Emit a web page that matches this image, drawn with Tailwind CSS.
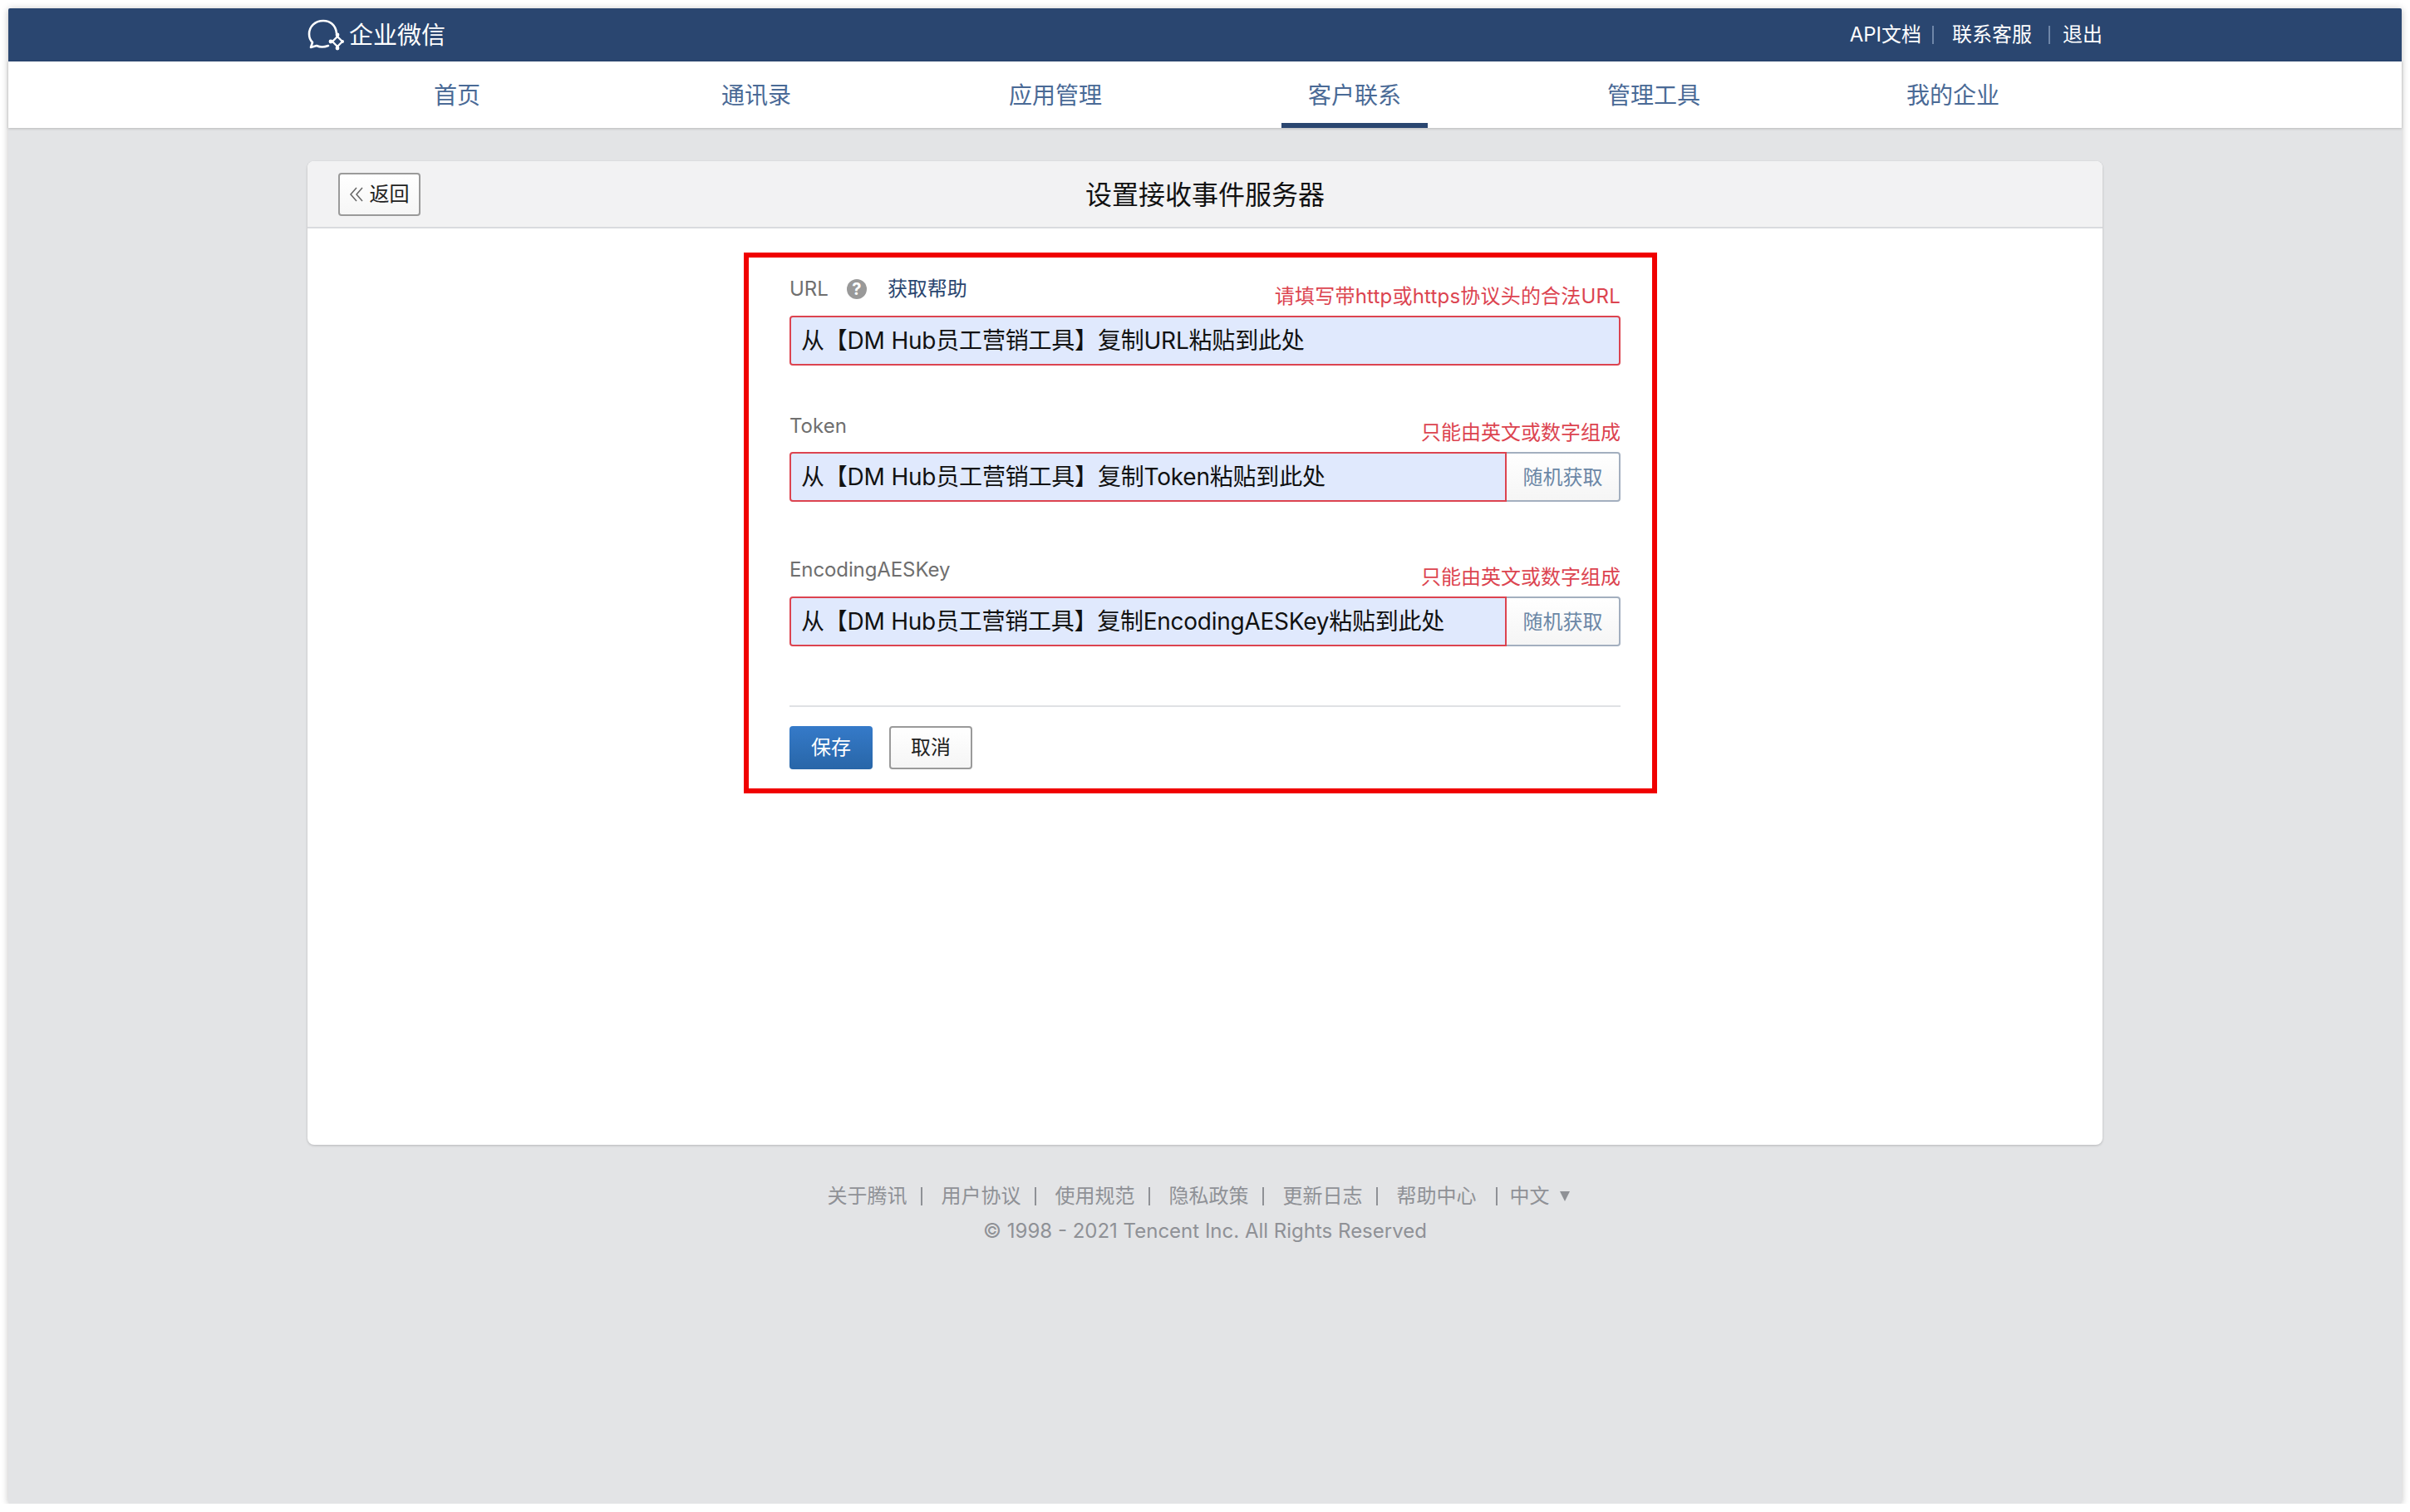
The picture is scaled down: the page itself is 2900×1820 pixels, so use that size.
<!DOCTYPE html>
<html lang="zh-CN">
<head>
  <meta charset="UTF-8" />
  <title>企业微信</title>
  <script src="https://cdn.jsdelivr.net/npm/@tailwindcss/browser@4"></script>
</head>
<body class="bg-white font-['Inter','Noto_Sans_CJK_SC',sans-serif]">
  <div class="relative w-[2880px] h-[1800px] ml-[10px] mt-[10px] rounded-[2px] bg-[#e3e4e6] shadow-[0_1px_8px_rgba(0,0,0,0.25)]">
    <!-- Top bar -->
    <header class="h-16 bg-[#2a4670] text-white rounded-t-[2px]">
      <div class="w-[2160px] h-full ml-[360px] flex items-center justify-between">
        <div class="flex items-center gap-[6px]">
          <svg width="44" height="40" viewBox="0 0 44 40" fill="none" class="mt-[2px]">
            <path d="M35 17C34 7 27 2 19 2C9 2 2 9 2 18C2 23 4 26 6 28L4 34L11 32C15 34 20 34 25 32" stroke="white" stroke-width="2.6" stroke-linecap="round" stroke-linejoin="round"/>
            <path d="M36 21L42 27L36 33L30 27Z" stroke="white" stroke-width="2.4" stroke-linejoin="round"/>
            <circle cx="36" cy="19" r="2.4" fill="white"/>
            <circle cx="28" cy="27" r="2.4" fill="white"/>
            <circle cx="36" cy="35" r="2.4" fill="white"/>
            <circle cx="42" cy="27" r="2" fill="white"/>
          </svg>
          <span class="text-[29px] leading-none">企业微信</span>
        </div>
        <div class="flex items-center text-[24px] leading-none">
          <span>API文档</span>
          <span class="w-[2px] h-[22px] bg-[#6f86a8] ml-[13px] mr-[22px]"></span>
          <span>联系客服</span>
          <span class="w-[2px] h-[22px] bg-[#6f86a8] ml-[20px] mr-[15px]"></span>
          <span>退出</span>
        </div>
      </div>
    </header>

    <!-- Nav -->
    <nav class="h-20 bg-white shadow-[0_1px_3px_rgba(0,0,0,0.2)]">
      <ul class="w-[2160px] h-full ml-[360px] grid grid-cols-6 text-[28px] text-[#4a6a96] text-center">
        <li class="pt-[20px]">首页</li>
        <li class="pt-[20px]">通讯录</li>
        <li class="pt-[20px]">应用管理</li>
        <li class="pt-[20px] h-full w-[176px] mx-auto border-b-[6px] border-[#2a4670]">客户联系</li>
        <li class="pt-[20px]">管理工具</li>
        <li class="pt-[20px]">我的企业</li>
      </ul>
    </nav>

    <!-- Card -->
    <main class="w-[2160px] h-[1184px] ml-[360px] mt-10 bg-white rounded-lg shadow-[0_1px_3px_rgba(0,0,0,0.2)]">
      <div class="relative h-[81px] bg-[#f2f2f3] rounded-t-lg border-b-2 border-[#d9dbdf] flex items-center justify-center">
        <button class="absolute left-[37px] top-[14px] w-[99px] h-[52px] bg-gradient-to-b from-white to-[#f6f6f6] border-2 border-[#9a9a9a] rounded text-[24px] text-[#222] flex items-center justify-center gap-[8px]">
          <svg width="16" height="18" viewBox="0 0 16 18" fill="none" stroke="#666" stroke-width="1.5"><path d="M8 1L1 9L8 17"/><path d="M15 1L8 9L15 17"/></svg>
          <span>返回</span>
        </button>
        <h1 class="text-[32px] text-[#111] pt-[2px]">设置接收事件服务器</h1>
      </div>

      <form class="w-[1000px] ml-[580px]">
        <div class="flex items-end justify-between h-[105px] pb-[5px] relative">
          <div class="absolute left-0 top-[55px] flex items-center text-[24px] leading-[36px]">
            <span class="text-[#6f6f6f]">URL</span>
            <span class="w-[24px] h-[24px] ml-[22px] rounded-full bg-[#999] text-white text-[20px] leading-[24px] font-bold text-center">?</span>
            <a class="ml-[25px] text-[#2a4670]">获取帮助</a>
          </div>
          <span></span>
          <span class="text-[24px] leading-[36px] tracking-[0.2px] text-[#dc4450]">请填写带http或https协议头的合法URL</span>
        </div>
        <div class="h-[60px] border-2 border-[#dc4450] rounded bg-[#e0e9fd] px-[12px] text-[28px] leading-[56px] tracking-[-0.2px] text-[#111]">从【DM Hub员工营销工具】复制URL粘贴到此处</div>

        <div class="flex items-end justify-between h-[104px] pb-[5px] relative">
          <span class="absolute left-0 top-[55px] text-[24px] leading-[36px] text-[#6f6f6f]">Token</span>
          <span></span>
          <span class="text-[24px] leading-[36px] text-[#dc4450]">只能由英文或数字组成</span>
        </div>
        <div class="flex h-[60px]">
          <div class="w-[863px] border-2 border-[#dc4450] rounded-l bg-[#e0e9fd] px-[12px] text-[28px] leading-[56px] tracking-[-0.2px] text-[#111]">从【DM Hub员工营销工具】复制Token粘贴到此处</div>
          <button type="button" class="w-[137px] pt-[2px] border-2 border-l-0 border-[#a3afbf] rounded-r bg-gradient-to-b from-white to-[#f5f5f5] text-[24px] text-[#6b87a6]">随机获取</button>
        </div>

        <div class="flex items-end justify-between h-[114px] pb-[5px] relative">
          <span class="absolute left-0 top-[64px] text-[24px] leading-[36px] tracking-[-0.1px] text-[#6f6f6f]">EncodingAESKey</span>
          <span></span>
          <span class="text-[24px] leading-[36px] text-[#dc4450]">只能由英文或数字组成</span>
        </div>
        <div class="flex h-[60px]">
          <div class="w-[863px] border-2 border-[#dc4450] rounded-l bg-[#e0e9fd] px-[12px] text-[28px] leading-[56px] tracking-[-0.25px] text-[#111]">从【DM Hub员工营销工具】复制EncodingAESKey粘贴到此处</div>
          <button type="button" class="w-[137px] pt-[2px] border-2 border-l-0 border-[#a3afbf] rounded-r bg-gradient-to-b from-white to-[#f5f5f5] text-[24px] text-[#6b87a6]">随机获取</button>
        </div>

        <div class="mt-[71px] border-t-2 border-[#dfe1e4] pt-[23px] flex gap-[20px]">
          <button type="button" class="w-[100px] h-[52px] rounded bg-gradient-to-b from-[#357ac9] to-[#2866a8] text-white text-[24px]">保存</button>
          <button type="button" class="w-[100px] h-[52px] rounded border-2 border-[#9a9a9a] bg-gradient-to-b from-white to-[#f5f5f5] text-[#222] text-[24px]">取消</button>
        </div>
      </form>
    </main>

    <!-- Footer -->
    <footer class="mt-[41px] text-[24px] leading-[42px] text-[#8f9196] text-center">
      <div class="flex justify-center items-center ml-[-16px]">
        <span>关于腾讯</span><span class="w-[2px] h-[22px] bg-[#8f9196] ml-[16px] mr-[23px]"></span>
        <span>用户协议</span><span class="w-[2px] h-[22px] bg-[#8f9196] ml-[16px] mr-[23px]"></span>
        <span>使用规范</span><span class="w-[2px] h-[22px] bg-[#8f9196] ml-[16px] mr-[23px]"></span>
        <span>隐私政策</span><span class="w-[2px] h-[22px] bg-[#8f9196] ml-[16px] mr-[23px]"></span>
        <span>更新日志</span><span class="w-[2px] h-[22px] bg-[#8f9196] ml-[16px] mr-[23px]"></span>
        <span>帮助中心</span><span class="w-[2px] h-[22px] bg-[#8f9196] ml-[23px] mr-[15px]"></span>
        <span>中文</span>
        <span class="ml-[12px] w-0 h-0 border-x-[6px] border-x-transparent border-t-[12px] border-t-[#8f9196]"></span>
      </div>
      <p>© 1998 - 2021 Tencent Inc. All Rights Reserved</p>
    </footer>

    <!-- Red annotation box -->
    <div class="absolute left-[885px] top-[294px] w-[1099px] h-[651px] border-[6px] border-[#f00000]"></div>
  </div>
</body>
</html>
